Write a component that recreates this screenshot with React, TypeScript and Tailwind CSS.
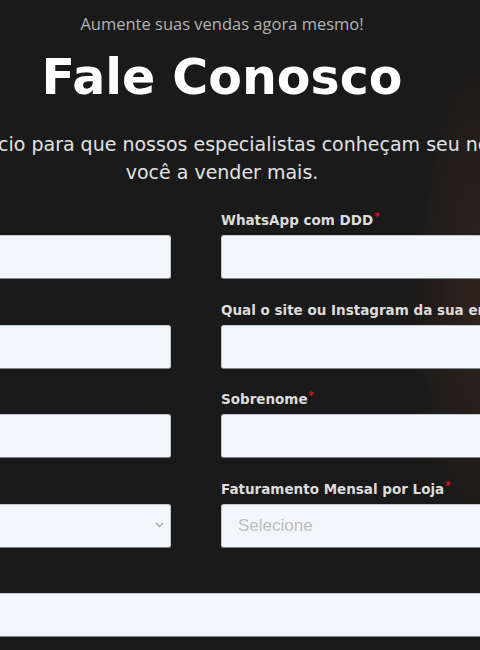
import React from 'react';

const labelCls =
  "block h-5 mb-[5px] whitespace-nowrap font-['DejaVu_Sans',sans-serif] text-[13.5px] font-bold leading-5 text-[#dcdcdc]";
const inputCls =
  "block h-[44px] w-full rounded-[3px] border border-[#c3c8cf] border-b-[#80858c] bg-[#f3f7fb] px-4 font-['Liberation_Sans',sans-serif] text-[17px] text-[#333] outline-none";

function Req() {
  return <span className="ml-px align-top text-[10px] leading-[14px] text-[#e0101c]">*</span>;
}

function Field({ label, wide }: { label: string; wide?: boolean }) {
  return (
    <div className={wide ? 'col-span-2' : ''}>
      <label className={labelCls}>
        {label}
        <Req />
      </label>
      <input type="text" className={inputCls} />
    </div>
  );
}

function SelectField({ label, placeholder }: { label: string; placeholder?: string }) {
  return (
    <div>
      <label className={labelCls}>
        {label}
        <Req />
      </label>
      <div className="relative">
        <select
          defaultValue=""
          className={`${inputCls} appearance-none text-[#bdbdbd]`}
        >
          <option value="" disabled>
            {placeholder ?? ''}
          </option>
        </select>
        {/* chevron */}
        <svg
          className="pointer-events-none absolute right-[7px] top-[18px]"
          width="9"
          height="6"
          viewBox="0 0 9 6"
          fill="none"
        >
          <path d="M1 1l3.5 3.5L8 1" stroke="#a3a3a3" strokeWidth="1.4" />
        </svg>
      </div>
    </div>
  );
}

export default function App() {
  return (
    <div className="min-h-screen w-full overflow-hidden bg-[#1a1a1a] bg-[radial-gradient(ellipse_70px_250px_at_100%_45%,rgba(72,44,30,0.5),transparent)]">
      {/* Header */}
      <div className="ml-[-158px] w-[760px] pt-3 text-center">
        <p className="h-6 font-['Open_Sans',sans-serif] text-[16.5px] leading-6 text-[#b4b4b4]">
          Aumente suas vendas agora mesmo!
        </p>
        <h1 className="mt-3 h-[60px] font-['DejaVu_Sans',sans-serif] text-[49px] font-bold leading-[60px] text-white">
          Fale Conosco
        </h1>
        <div className="mt-[22px] font-['DejaVu_Sans',sans-serif] text-[19px] leading-7 text-[#e2e2e2]">
          <div className="flex justify-center">
            <span className="whitespace-nowrap">
              Fale sobre seu negócio para que nossos especialistas conheçam seu negócio e ajudem
            </span>
          </div>
          <div>você a vender mais.</div>
        </div>
      </div>

      {/* Form */}
      <form className="ml-[-159px] mt-6 grid w-[710px] grid-cols-2 gap-x-[50px] gap-y-[20.5px]">
        <Field label="E-mail" />
        <Field label="WhatsApp com DDD" />
        <Field label="Empresa" />
        <div>
          <label className={labelCls}>Qual o site ou Instagram da sua empresa?</label>
          <input type="text" className={inputCls} />
        </div>
        <Field label="Nome" />
        <Field label="Sobrenome" />
        <SelectField label="Lojas" />
        <SelectField label="Faturamento Mensal por Loja" placeholder="Selecione" />
        <Field label="Cargo" wide />
      </form>
    </div>
  );
}
